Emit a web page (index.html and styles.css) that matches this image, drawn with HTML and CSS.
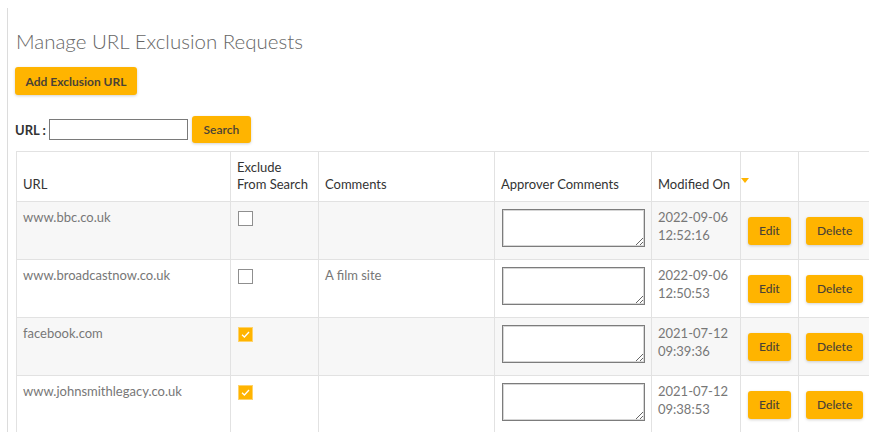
FILE: index.html
```html
<!DOCTYPE html>
<html lang="en">
<head>
<meta charset="utf-8">
<title>Manage URL Exclusion Requests</title>
<link rel="stylesheet" href="styles.css">
</head>
<body>
<div class="page">
  <h1 class="title">Manage URL Exclusion Requests</h1>
  <div class="actions">
    <button class="btn btn-add" type="button">Add Exclusion URL</button>
  </div>
  <form class="search">
    <label class="search-label" for="url">URL :</label>
    <input class="search-input" id="url" type="text">
    <button class="btn btn-search" type="button">Search</button>
  </form>
  <table class="grid">
    <colgroup>
      <col class="c-url"><col class="c-ex"><col class="c-com"><col class="c-app"><col class="c-mod"><col class="c-edit"><col class="c-del">
    </colgroup>
    <thead>
      <tr>
        <th>URL</th>
        <th>Exclude<br>From Search</th>
        <th>Comments</th>
        <th>Approver Comments</th>
        <th class="sorted">Modified On</th>
        <th></th>
        <th></th>
      </tr>
    </thead>
    <tbody>
      <tr>
        <td>www.bbc.co.uk</td>
        <td><span class="check"></span></td>
        <td></td>
        <td><textarea class="note"></textarea></td>
        <td class="date">2022-09-06<br>12:52:16</td>
        <td class="btn-cell"><button class="btn btn-row" type="button">Edit</button></td>
        <td class="btn-cell"><button class="btn btn-row" type="button">Delete</button></td>
      </tr>
      <tr>
        <td>www.broadcastnow.co.uk</td>
        <td><span class="check"></span></td>
        <td>A film site</td>
        <td><textarea class="note"></textarea></td>
        <td class="date">2022-09-06<br>12:50:53</td>
        <td class="btn-cell"><button class="btn btn-row" type="button">Edit</button></td>
        <td class="btn-cell"><button class="btn btn-row" type="button">Delete</button></td>
      </tr>
      <tr>
        <td>facebook.com</td>
        <td><span class="check on"><svg viewBox="0 0 13 13"><path d="M3 6.8 5.4 9 10 4" fill="none" stroke="#fff" stroke-width="1.3"/></svg></span></td>
        <td></td>
        <td><textarea class="note"></textarea></td>
        <td class="date">2021-07-12<br>09:39:36</td>
        <td class="btn-cell"><button class="btn btn-row" type="button">Edit</button></td>
        <td class="btn-cell"><button class="btn btn-row" type="button">Delete</button></td>
      </tr>
      <tr>
        <td>www.johnsmithlegacy.co.uk</td>
        <td><span class="check on"><svg viewBox="0 0 13 13"><path d="M3 6.8 5.4 9 10 4" fill="none" stroke="#fff" stroke-width="1.3"/></svg></span></td>
        <td></td>
        <td><textarea class="note"></textarea></td>
        <td class="date">2021-07-12<br>09:38:53</td>
        <td class="btn-cell"><button class="btn btn-row" type="button">Edit</button></td>
        <td class="btn-cell"><button class="btn btn-row" type="button">Delete</button></td>
      </tr>
    </tbody>
  </table>
</div>
</body>
</html>
```
FILE: styles.css
```css
html, body {
  margin: 0;
  padding: 0;
  background: #fff;
  overflow: hidden;
}

body {
  font-family: Lato, "Open Sans", sans-serif;
  color: #333;
}

.page {
  margin: 8px 0 0 7px;
  padding: 20px 0 0 8px;
  border-left: 1px solid #dcdcdc;
  min-height: 500px;
}

.title {
  margin: 0;
  font-size: 20.5px;
  font-weight: 300;
  color: #666;
  line-height: 26px;
}

.actions {
  margin-top: 13px;
}

.btn {
  font-family: inherit;
  font-size: 12px;
  font-weight: 700;
  color: #4a4236;
  background: #ffb400;
  border: 0;
  border-radius: 3px;
  box-shadow: 0 1px 3px rgba(0, 0, 0, 0.18);
  padding: 0 12px;
  height: 28px;
  white-space: nowrap;
  cursor: pointer;
}

.btn-add {
  width: 122px;
  padding: 0;
  margin-left: -1px;
}

.search {
  display: flex;
  align-items: center;
  margin: 21px 0 0 -1px;
  height: 27px;
}

.search-label {
  font-size: 13px;
  font-weight: 700;
  color: #333;
  margin-right: 3px;
}

.search-input {
  width: 139px;
  height: 21px;
  box-sizing: border-box;
  border: 1px solid #7a7a7a;
  padding: 1px 3px;
  margin: 0 4px 0 0;
  font-family: inherit;
}

.btn-search {
  height: 27px;
  width: 59px;
  padding: 0;
  font-weight: 600;
}

.grid {
  margin-top: 8px;
  border-collapse: collapse;
  table-layout: fixed;
  width: 862px;
  font-size: 13px;
}

.c-url { width: 214px; }
.c-ex { width: 88px; }
.c-com { width: 176px; }
.c-app { width: 157px; }
.c-mod { width: 89px; }
.c-edit { width: 58px; }
.c-del { width: 80px; }

.grid th,
.grid td {
  border: 1px solid #e2e2e2;
  padding: 7px 6px;
  text-align: left;
}

.grid th {
  vertical-align: bottom;
  font-weight: 400;
  color: #333;
  line-height: 17px;
  padding-bottom: 8px;
  height: 49px;
  box-sizing: border-box;
}

.grid th.sorted {
  position: relative;
}

.grid th.sorted::after {
  content: "";
  position: absolute;
  right: -9px;
  top: 26px;
  border-left: 4px solid transparent;
  border-right: 4px solid transparent;
  border-top: 5px solid #ffb400;
}

.grid tbody tr {
  height: 58px;
}

.grid td {
  vertical-align: top;
  color: #777;
  line-height: 18px;
  padding-top: 6px;
  padding-bottom: 0;
}

.grid tbody tr:nth-child(odd) td {
  background: #f7f7f7;
}

.check {
  display: inline-block;
  width: 15px;
  height: 15px;
  box-sizing: border-box;
  border: 1px solid #8f8f8f;
  background: #fff;
  margin: 3px 0 0 1px;
  vertical-align: top;
}

.check.on {
  background: #ffb400;
  border-color: #ffd36a;
}

.check svg {
  display: block;
  width: 13px;
  height: 13px;
}

.note {
  display: inline-block;
  width: 143px;
  height: 38px;
  box-sizing: border-box;
  margin: 1px 0 0 1px;
  border: 1px solid #7c7c7c;
  box-shadow: inset 0 0 0 1px #d6d6d6;
  background: #fff;
  resize: vertical;
  vertical-align: top;
}

.grid td.date {
  padding-top: 6px;
}

.grid td.btn-cell {
  vertical-align: middle;
  padding: 0 0 0 7px;
}

.btn-row {
  font-weight: 500;
  padding: 0 11px;
}
```
